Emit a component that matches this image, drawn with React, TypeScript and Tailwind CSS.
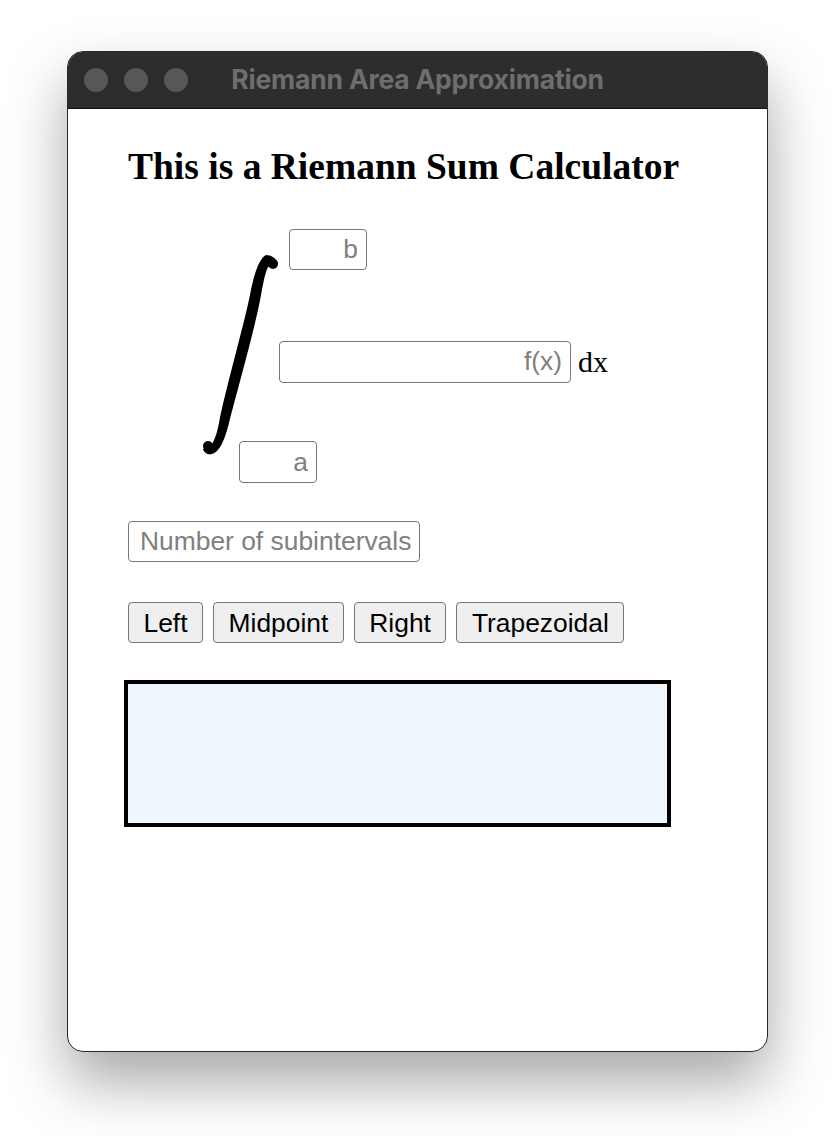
import React from "react";

const inputBase =
    "border-[1.5px] border-[#767676] rounded-[4px] bg-white text-[26.4px] text-black placeholder:text-[#808080] outline-none font-['Liberation_Sans',Arial,sans-serif]";

const buttonBase =
    "h-[41px] px-[14.5px] border-[1.5px] border-[#767676] rounded-[4px] bg-[#efefef] text-[26.4px] text-black leading-none font-['Liberation_Sans',Arial,sans-serif]";

// big integral sign, drawn
const IntegralSign = () => (
    <svg width="77" height="200" viewBox="0 0 77 200" className="shrink-0 ml-[74px] mt-[26px]">
        <path
            d="M 64 0 C 69 0, 74 3, 76 8 L 67 11 C 64 14, 62 24, 59 40 C 54 70, 34 140, 27 168 C 23 184, 18 197, 10 199 C 6 200, 2 198, 1 194 L 10 189 C 13 184, 15 178, 17 168 C 22 140, 42 70, 48 40 C 51 24, 56 4, 64 0 Z"
            fill="black"
        />
        <circle cx="71" cy="9" r="5" fill="black" />
        <circle cx="6" cy="191" r="5" fill="black" />
    </svg>
);

const App = () => {
    return (
        <div className="w-[836px] h-[1136px] bg-white pt-[51px] pl-[67px]">
            <div className="w-[701px] h-[1001px] rounded-[16px] overflow-hidden border border-[#2a2a2a] bg-white shadow-[0_30px_60px_rgba(0,0,0,0.35)] flex flex-col">
                {/* title bar */}
                <div className="h-[57px] shrink-0 bg-[#2c2d2c] border-b border-[#111] grid grid-cols-[1fr_auto_1fr] items-center">
                    <div className="flex gap-[16px] pl-[16px]">
                        <span className="w-[24px] h-[24px] rounded-full bg-[#565756]" />
                        <span className="w-[24px] h-[24px] rounded-full bg-[#565756]" />
                        <span className="w-[24px] h-[24px] rounded-full bg-[#565756]" />
                    </div>
                    <div className="text-[#6d6e6d] text-[26.5px] font-bold font-['Inter',sans-serif] tracking-[-0.2px]">Riemann Area Approximation</div>
                    <div />
                </div>

                {/* content */}
                <div className="flex flex-col pl-[60px] pt-[30px]">
                    <h1 className="text-[37.5px] font-bold text-black font-['Liberation_Serif','Times_New_Roman',serif] leading-normal">
                        This is a Riemann Sum Calculator
                    </h1>

                    <div className="flex mt-[34px]">
                        <IntegralSign />
                        <div className="flex flex-col items-start -ml-[1px]">
                            <input placeholder="b" className={`${inputBase} w-[78px] h-[41px] ml-[11px] pr-[8px] text-right`} />
                            <div className="flex items-center mt-[69px] ml-[1px]">
                                <input placeholder="f(x)" className={`${inputBase} w-[292px] h-[42px] pr-[8px] text-right`} />
                                <span className="ml-[7px] text-[30px] text-black font-['Liberation_Serif','Times_New_Roman',serif]">dx</span>
                            </div>
                            <input placeholder="a" className={`${inputBase} w-[78px] h-[42px] mt-[57px] -ml-[39px] pr-[8px] text-right`} />
                        </div>
                    </div>

                    <input placeholder="Number of subintervals" className={`${inputBase} w-[292px] h-[41px] mt-[38px] pl-[11px]`} />

                    <div className="flex gap-[10px] mt-[40px]">
                        <button className={buttonBase}>Left</button>
                        <button className={buttonBase}>Midpoint</button>
                        <button className={buttonBase}>Right</button>
                        <button className={buttonBase}>Trapezoidal</button>
                    </div>

                    <div className="w-[547px] h-[147px] mt-[37px] -ml-[4px] border-4 border-black bg-[#f0f6fd]" />
                </div>
            </div>
        </div>
    );
};

export default App;
